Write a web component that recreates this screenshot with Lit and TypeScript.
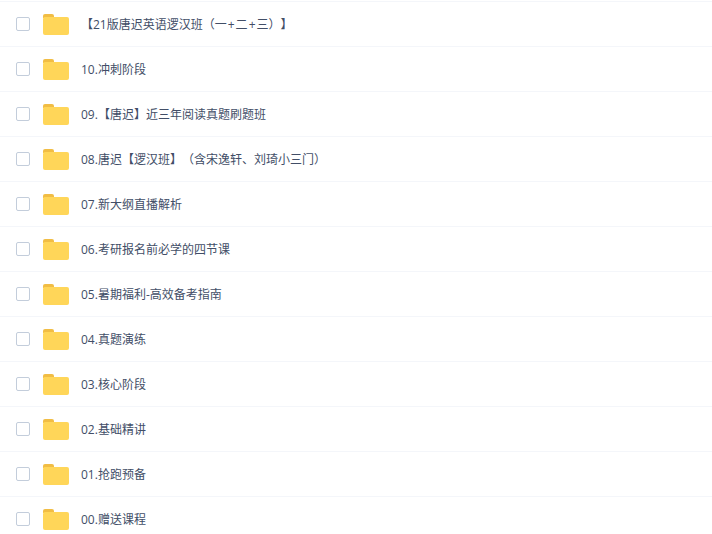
import { LitElement, html, css } from "lit";
import { customElement } from "lit/decorators.js";

const NAMES = [
  "【21版唐迟英语逻汉班（一+二+三）】",
  "10.冲刺阶段",
  "09.【唐迟】近三年阅读真题刷题班",
  "08.唐迟【逻汉班】（含宋逸轩、刘琦小三门）",
  "07.新大纲直播解析",
  "06.考研报名前必学的四节课",
  "05.暑期福利-高效备考指南",
  "04.真题演练",
  "03.核心阶段",
  "02.基础精讲",
  "01.抢跑预备",
  "00.赠送课程",
];

@customElement("app-root")
export class AppRoot extends LitElement {
  static styles = css`
    :host {
      display: block;
      width: 712px;
      height: 534px;
      overflow: hidden;
      background: #fff;
      font-family: "Open Sans", "Noto Sans CJK SC", sans-serif;
    }
    .list {
      padding-top: 1px;
    }
    .row {
      height: 44px;
      display: flex;
      align-items: center;
      border-top: 1px solid #f4f6fa;
    }
    .check {
      width: 12px;
      height: 12px;
      margin-left: 16px;
      border: 1px solid #c3cddb;
      border-radius: 2px;
      flex: none;
    }
    .folder {
      width: 26px;
      height: 21px;
      margin-top: 1px;
      margin-left: 13px;
      flex: none;
      display: block;
    }
    .name {
      margin-left: 12px;
      margin-top: 2px;
      font-size: 12px;
      line-height: 20px;
      color: #424e67;
      white-space: nowrap;
      text-spacing-trim: space-all;
      font-kerning: none;
      font-feature-settings: "palt" 0, "chws" 0, "kern" 0;
    }
    .plus {
      padding: 0 1px;
    }
  `;

  private renderName(name: string) {
    const parts = name.split("+");
    return parts.map((p, i) =>
      i === 0 ? p : html`<span class="plus">+</span>${p}`
    );
  }

  render() {
    return html`<div class="list">
      ${NAMES.map(
        (n) => html`<div class="row">
          <span class="check"></span>
          <svg class="folder" viewBox="0 0 26 21" aria-hidden="true">
            <path d="M0 2a2 2 0 0 1 2-2h7a2 2 0 0 1 2 2v2H0z" fill="#f1bd45" />
            <rect x="0" y="3" width="26" height="18" rx="2" fill="#ffd659" />
          </svg>
          <span class="name">${this.renderName(n)}</span>
        </div>`
      )}
    </div>`;
  }
}
